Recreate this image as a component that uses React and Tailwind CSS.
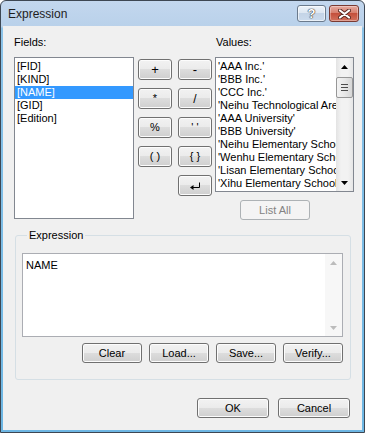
import React from 'react';

const fields = ['[FID]', '[KIND]', '[NAME]', '[GID]', '[Edition]'];
const values = [
  "'AAA Inc.'",
  "'BBB Inc.'",
  "'CCC Inc.'",
  "'Neihu Technological Area'",
  "'AAA University'",
  "'BBB University'",
  "'Neihu Elementary School'",
  "'Wenhu Elementary School'",
  "'Lisan Elementary School'",
  "'Xihu Elementary School'",
];

function Btn({ children, className = '' }) {
  return (
    <div
      className={`flex items-center justify-center rounded-[3px] border border-[#707070] bg-[linear-gradient(to_bottom,#f2f2f2_0%,#ebebeb_49%,#dddddd_50%,#cfcfcf_100%)] text-[11px] leading-none text-black shadow-[inset_0_0_0_1px_#fcfcfc] ${className}`}
    >
      {children}
    </div>
  );
}

function EnterIcon() {
  return (
    <svg width="12" height="8" viewBox="0 0 12 8">
      <path d="M10.5 0.5 V5.5 H3.5" fill="none" stroke="#000" strokeWidth="1" />
      <polygon points="1,5.5 4.5,3 4.5,8" fill="#000" />
    </svg>
  );
}

function Arrow({ up, color = '#000' }) {
  return (
    <svg width="7" height="4" viewBox="0 0 7 4">
      <polygon points={up ? '0,4 3.5,0 7,4' : '0,0 7,0 3.5,4'} fill={color} />
    </svg>
  );
}

export default function App() {
  return (
    <div className="flex h-[433px] w-[365px] flex-col rounded-t-[6px] border border-[#3d4753] bg-[linear-gradient(to_bottom,#c3d7ee_0px,#b9d1ea_26px,#8cc3e8_27px,#6db6e3_100%)] font-['Liberation_Sans',Arial,sans-serif] text-black">
      {/* title bar */}
      <div className="flex h-[25px] shrink-0 items-start">
        <div className="pl-[7px] pt-[6px] text-[12px] leading-[14px] text-[#1e1e1e]">Expression</div>
        <div className="ml-auto mr-[5px] mt-[4px] flex gap-[3px]">
          <div className="flex h-[17px] w-[29px] items-center justify-center rounded-[3px] border border-[#6b7a8c] bg-[linear-gradient(to_bottom,#eef3f9_0%,#dde7f2_45%,#c4d4e7_50%,#cbdbed_100%)] shadow-[inset_0_0_0_1px_rgba(255,255,255,0.6)]">
            <span className="text-[13px] font-bold leading-none text-white [text-shadow:0_0_1px_#333,0_0_1px_#333,0_0_1px_#333]">?</span>
          </div>
          <div className="flex h-[17px] w-[30px] items-center justify-center rounded-[3px] border border-[#7a3a32] bg-[linear-gradient(to_bottom,#e6aaa0_0%,#d7806f_45%,#c4503c_50%,#d2725e_100%)] shadow-[inset_0_0_0_1px_rgba(255,255,255,0.35)]">
            <svg width="13" height="10" viewBox="0 0 13 10">
              <path d="M2 1.5 L11 8.5 M11 1.5 L2 8.5" stroke="#5a2a22" strokeWidth="4" strokeLinecap="round" />
              <path d="M2 1.5 L11 8.5 M11 1.5 L2 8.5" stroke="#fff" strokeWidth="2.2" strokeLinecap="round" />
            </svg>
          </div>
        </div>
      </div>

      {/* content */}
      <div className="mx-[2px] mb-[2px] flex flex-1 flex-col bg-[#f0f0f0] pl-[11px] pt-[10px] text-[11px]">
        <div className="flex">
          {/* Fields */}
          <div className="flex w-[120px] flex-col">
            <div className="h-[13px] leading-[13px]">Fields:</div>
            <div className="mt-[8px] h-[162px] border border-[#828790] bg-white pt-[2px]">
              {fields.map((f, i) => (
                <div
                  key={f}
                  className={`h-[13px] pl-[2px] leading-[13px] ${i === 2 ? 'bg-[#3399ff] text-white' : ''}`}
                >
                  {f}
                </div>
              ))}
            </div>
          </div>

          {/* operators */}
          <div className="ml-[4px] mt-[23px] grid grid-cols-[34px_34px] grid-rows-[21px_21px_21px_21px_21px] gap-x-[6px] gap-y-[8px]">
            <Btn className="text-[13px]">+</Btn>
            <Btn className="text-[13px]">-</Btn>
            <Btn>*</Btn>
            <Btn className="text-[12px]">/</Btn>
            <Btn>%</Btn>
            <Btn>' '</Btn>
            <Btn>( )</Btn>
            <Btn>{'{ }'}</Btn>
            <div />
            <Btn>
              <EnterIcon />
            </Btn>
          </div>

          {/* Values */}
          <div className="ml-[3px] flex w-[139px] flex-col">
            <div className="h-[13px] pl-[1px] leading-[13px]">Values:</div>
            <div className="mt-[8px] flex h-[135px] border border-[#828790] bg-white">
              <div className="min-w-0 flex-1 overflow-hidden pt-[2px]">
                {values.map((v) => (
                  <div key={v} className="h-[13px] whitespace-nowrap pl-[2px] leading-[13px]">
                    {v}
                  </div>
                ))}
              </div>
              <div className="flex w-[17px] flex-col items-center bg-[linear-gradient(to_right,#e3e3e3,#f2f2f2_30%,#f2f2f2_70%,#e6e6e6)]">
                <div className="flex h-[17px] items-center justify-center">
                  <Arrow up />
                </div>
                <div className="mt-[2px] flex h-[21px] w-[17px] flex-col items-center justify-center gap-[2px] rounded-[2px] border border-[#979797] bg-[linear-gradient(to_right,#f3f3f3,#e8e8e8_50%,#d6d6d6)]">
                  <div className="h-px w-[7px] bg-[#4c4c4c]" />
                  <div className="h-px w-[7px] bg-[#4c4c4c]" />
                  <div className="h-px w-[7px] bg-[#4c4c4c]" />
                </div>
                <div className="mt-auto flex h-[17px] items-center justify-center">
                  <Arrow />
                </div>
              </div>
            </div>
            <div className="ml-[25px] mt-[8px] flex h-[20px] w-[70px] items-center justify-center rounded-[3px] border border-[#adb2b5] bg-[#f4f4f4] text-[#838383]">
              List All
            </div>
          </div>
        </div>

        {/* Expression group */}
        <fieldset className="ml-[1px] mt-[9px] w-[336px] rounded-[3px] border border-[#d5dfe5] pb-[16px] pl-[6px] pr-[7px] pt-[11px]">
          <legend className="ml-[5px] px-[2px] leading-[13px]">Expression</legend>
          <div className="flex h-[84px] border border-[#abadb3] bg-white">
            <div className="flex-1 pl-[3px] pt-[5px] leading-[13px]">NAME</div>
            <div className="flex w-[17px] flex-col items-center bg-[#f7f7f7]">
              <div className="flex h-[17px] items-center justify-center">
                <Arrow up color="#bcbcbc" />
              </div>
              <div className="mt-auto flex h-[17px] items-center justify-center">
                <Arrow color="#bcbcbc" />
              </div>
            </div>
          </div>
          <div className="mt-[6px] flex justify-end gap-[7px]">
            <Btn className="h-[20px] w-[60px]">Clear</Btn>
            <Btn className="h-[20px] w-[60px]">Load...</Btn>
            <Btn className="h-[20px] w-[60px]">Save...</Btn>
            <Btn className="h-[20px] w-[60px]">Verify...</Btn>
          </div>
        </fieldset>

        <div className="mr-[12px] mt-[18px] flex justify-end gap-[9px]">
          <Btn className="h-[20px] w-[72px] border-[#3c7fb1] shadow-[inset_0_0_0_1px_#a8ddf6]">OK</Btn>
          <Btn className="h-[20px] w-[72px]">Cancel</Btn>
        </div>
      </div>
    </div>
  );
}
